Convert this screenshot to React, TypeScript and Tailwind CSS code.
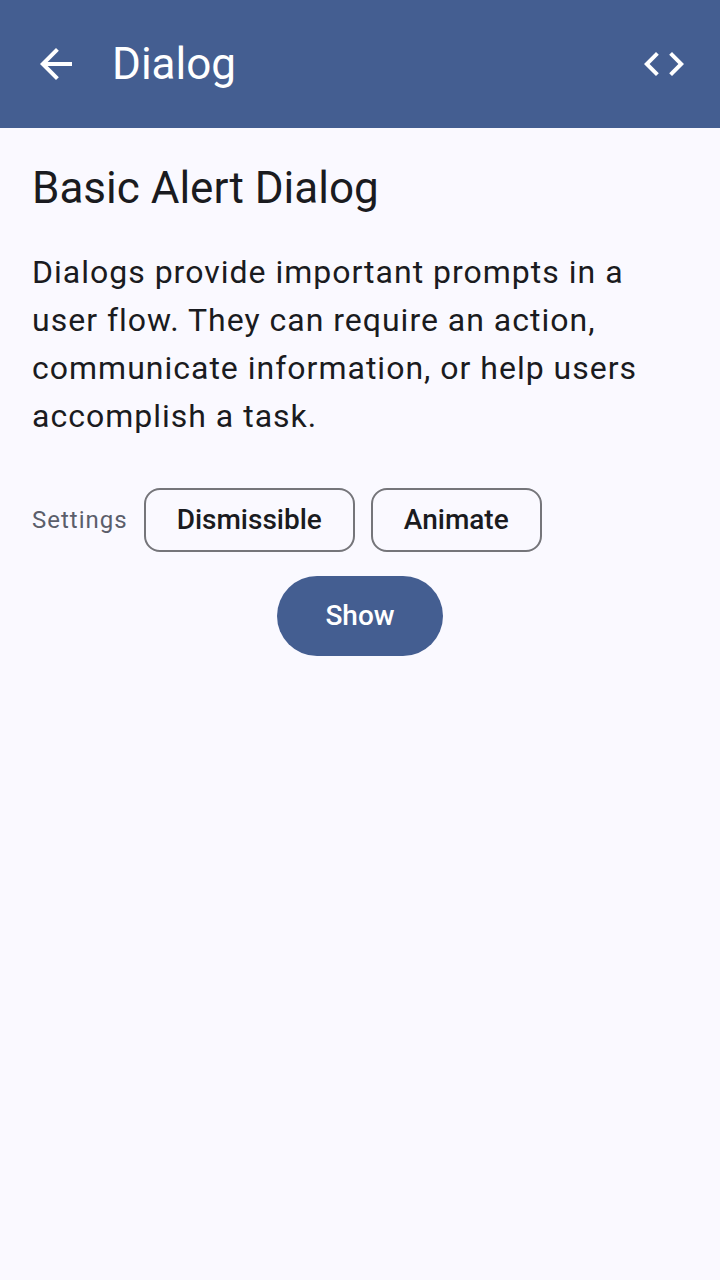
import React, { useState } from "react";

function FilterChip({ label }: { label: string }) {
  const [selected, setSelected] = useState(false);
  return (
    <button
      type="button"
      aria-pressed={selected}
      onClick={() => setSelected(!selected)}
      className="h-16 rounded-2xl border-2 border-[#75757a] px-[31px] text-[28px] font-medium aria-pressed:bg-[#dae2f9]"
    >
      {label}
    </button>
  );
}

export default function App() {
  return (
    <div className="min-h-screen bg-[#faf9ff] font-['Roboto',sans-serif] text-[#1a1b20]">
      <header className="flex h-32 items-center bg-[#445e91] px-8 text-white">
        <button type="button" aria-label="Back" className="size-12">
          <svg viewBox="0 0 24 24" className="size-12" fill="currentColor" aria-hidden="true">
            <path d="M20 11H7.83l5.59-5.59L12 4l-8 8 8 8 1.41-1.41L7.83 13H20v-2z" />
          </svg>
        </button>
        <h1 className="ml-8 flex-1 text-[44px] leading-14">Dialog</h1>
        <button type="button" aria-label="View source" className="size-12">
          <svg viewBox="0 0 24 24" className="size-12" fill="currentColor" aria-hidden="true">
            <path d="M9.4 16.6L4.8 12l4.6-4.6L8 6l-6 6 6 6 1.4-1.4zm5.2 0l4.6-4.6-4.6-4.6L16 6l6 6-6 6-1.4-1.4z" />
          </svg>
        </button>
      </header>
      <main className="px-8 pt-8">
        <h2 className="text-[44px] leading-14">Basic Alert Dialog</h2>
        <p className="mt-8 text-[32px] leading-12 tracking-[1px]">
          Dialogs provide important prompts in a user flow. They can require an action, communicate
          information, or help users accomplish a task.
        </p>
        <div className="mt-12 flex flex-wrap items-center gap-4">
          <span className="text-2xl tracking-[1px] text-[#5b5e6b]">Settings</span>
          <FilterChip label="Dismissible" />
          <FilterChip label="Animate" />
        </div>
        <div className="mt-6 flex justify-center">
          <button type="button" className="h-20 rounded-full bg-[#445e91] px-12 text-[28px] font-medium text-white">
            Show
          </button>
        </div>
      </main>
    </div>
  );
}
